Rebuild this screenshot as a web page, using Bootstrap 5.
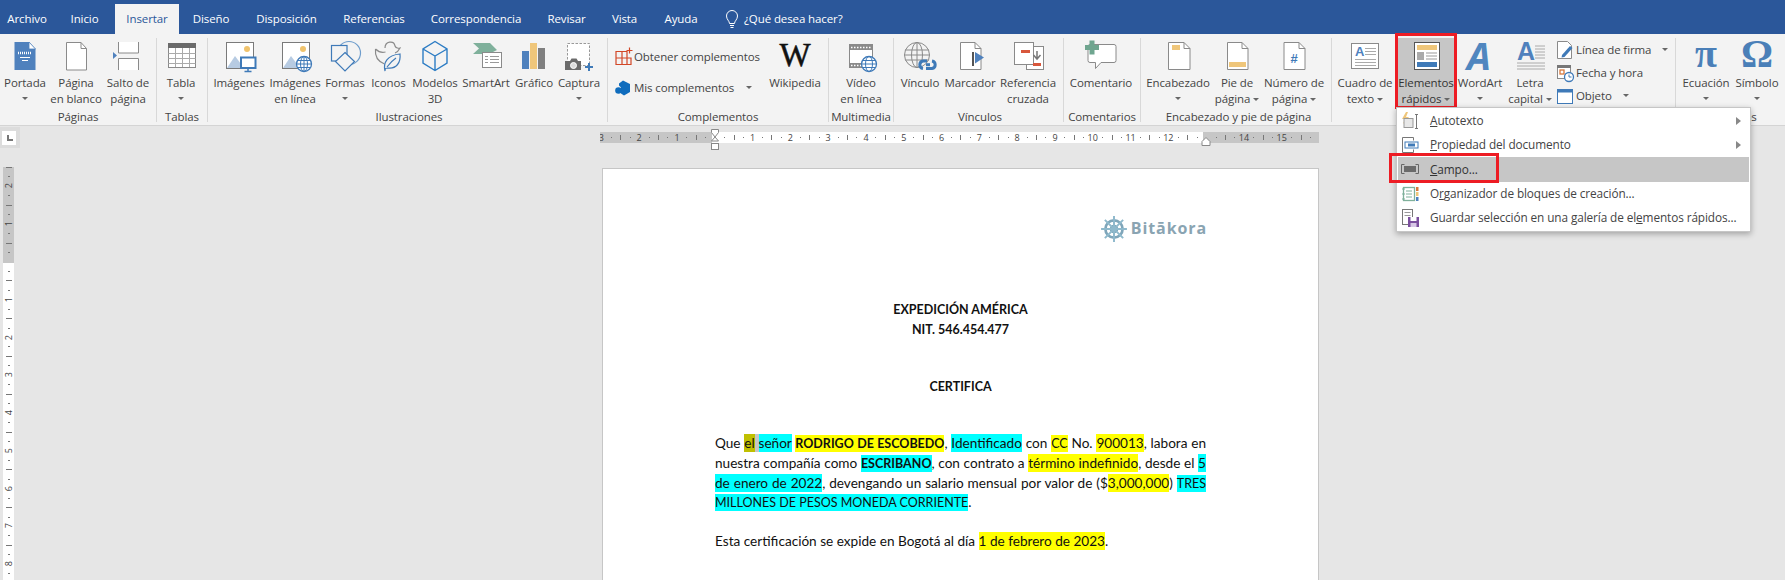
<!DOCTYPE html>
<html lang="es">
<head>
<meta charset="utf-8">
<title>Word</title>
<link href="https://cdn.jsdelivr.net/npm/bootstrap@5.3.0/dist/css/bootstrap.min.css" rel="stylesheet">
<style>
html,body{height:580px;overflow:hidden}
body{font-family:"Open Sans","Noto Sans",sans-serif;font-size:11.5px;color:#444;background:#e6e6e6;position:relative;letter-spacing:-.1px}
.tabbar{height:34px;background:#2b579a;color:#fff;display:grid;grid-template-columns:54px 61px 64px 64px 87px 88px 116px 65px 51px 62px 1fr;align-items:end}
.tabx{height:30px;line-height:30px;text-align:center;white-space:nowrap}
.tabx.on{background:#f3f3f3;color:#2b579a}
.tabq{height:30px;padding-left:13px;gap:5px}
.ribbon{height:92px;background:#f3f3f3;border-bottom:1px solid #d4d4d4;padding-top:4px}
.grp{height:84px;border-right:1px solid #d8d8d8;flex:none;display:flex;flex-direction:column}
.grp-btns{display:grid;height:72px}
.grp-lbl{height:12px;line-height:14px;text-align:center;white-space:nowrap}
.g1{width:157px}.g1 .grp-btns{grid-template-columns:50px 52px 52px}
.g2{width:51px}.g2 .grp-btns{grid-template-columns:48px}
.g3{width:400px;padding-left:3px}.g3 .grp-btns{grid-template-columns:56px 56px 44px 43px 50px 52px 44px 46px}
.g4{width:221px}.g4 .grp-btns{grid-template-columns:160px 54px}
.g5{width:65px}.g5 .grp-btns{grid-template-columns:64px}
.g6{width:170px;padding-left:3px}.g6 .grp-btns{grid-template-columns:46px 54px 62px}
.g7{width:77px}.g7 .grp-btns{grid-template-columns:74px}
.g8{width:191px;padding-left:5px}.g8 .grp-btns{grid-template-columns:64px 54px 60px}
.g9{width:344px;padding-left:1px}.g9 .grp-btns{grid-template-columns:64px 58px 50px 50px 115px}
.g10{width:109px;padding-left:4px;border-right:0}.g10 .grp-btns{grid-template-columns:52px 50px}
.rb{display:flex;flex-direction:column;align-items:center;padding-top:1px;line-height:15.5px;white-space:nowrap;min-width:0}
.rb>svg{width:36px;height:36px;flex:none;overflow:visible}
.rb>span{display:block}
.car{display:inline-block;width:0;height:0;border:3px solid transparent;border-top:3px solid #666;border-bottom:0;vertical-align:middle;margin-left:3px}
.car.solo{margin:6px 0 0}
.car.far{margin-left:11px}
.car.farther{margin-left:12px}
.rb-sel{background:#c6c6c6;height:68px;position:relative;color:#333}
.rb-sel::after{content:"";position:absolute;left:-2px;right:-2px;top:-5px;bottom:-3px;border:3px solid #ed1c24;z-index:3}
.smcol{display:flex;flex-direction:column;white-space:nowrap}
.smit{display:flex;align-items:center;height:23px}
.smit svg{width:20px;height:20px;flex:none;overflow:visible}
.cplx{padding-left:5px}
.cplx .smit{height:31px}
.cplx .smit:first-child{margin-top:3px}
.cplx .smit span.t{margin-left:1px}
.g9x .smit span.t{margin-left:1px}
.wiki{font-family:"Liberation Serif",serif;font-weight:400;font-size:33px;fill:#111;stroke:#111;stroke-width:.5px}
.pi{font-family:"Liberation Serif",serif;font-weight:700;font-size:40px;fill:#4a7fb8}
.wa{font-family:"Open Sans",sans-serif;font-weight:700;font-style:italic;font-size:38px;fill:#4f86bf}
.workrow{height:41px}
.corner{width:20px;height:21px;background:#dcdcdc;margin-top:1px;padding:4px 4px 3px 2px}
.cornerin{background:#fff;height:100%;position:relative}
.cornerin::after{content:"";position:absolute;left:5px;top:4px;width:6px;height:6px;border-left:2px solid #777;border-bottom:2px solid #777}
.hruler{width:719px;height:11px;margin:6px 0 0 580px;background:linear-gradient(to right,#c6c6c6 112px,#fff 112px,#fff 603px,#c6c6c6 603px);position:relative}
.hclip{overflow:hidden;height:11px;display:flex}
.hcell{flex:none;width:37.8px;height:11px;font-size:9px;line-height:11px;text-align:center;color:#444;letter-spacing:0;
background:linear-gradient(#777,#777) 9.4px 5px/1px 1px no-repeat,linear-gradient(#777,#777) 28.3px 5px/1px 1px no-repeat,linear-gradient(#777,#777) 0 3px/1px 5px no-repeat}
.hcell:first-child{margin-left:-17.5px}
.mk{position:absolute;overflow:visible}
.mk1{left:110px;top:-3px;width:10px;height:20px}
.mk2{left:601px;top:5px;width:10px;height:9px}
.vruler{width:11px;margin-left:3px;height:413px;overflow:hidden;flex:none;background:linear-gradient(to bottom,#c6c6c6 96px,#fff 96px)}
.vcell{height:37.8px;width:11px;display:flex;align-items:center;justify-content:center;font-size:9px;color:#444;letter-spacing:0;
background:linear-gradient(#777,#777) 5px 9.4px/2px 1px no-repeat,linear-gradient(#777,#777) 5px 28.3px/2px 1px no-repeat,linear-gradient(#777,#777) 3px 0/6px 1px no-repeat}
.vcell span{writing-mode:vertical-rl;transform:rotate(180deg);line-height:11px}
.sheet{width:717px;height:412px;margin:1px 0 0 588px;background:#fff;border:1px solid #c6c6c6;border-bottom:0;padding:47px 112px 0;flex:none;
font-family:Lato,"Liberation Sans",sans-serif;font-size:13.6px;line-height:19.7px;color:#111;letter-spacing:0}
.logoline{height:25px;margin-right:-1px}
.logoname{font-family:"Open Sans",sans-serif;font-weight:700;font-size:16px;letter-spacing:.9px;color:#8aa4b2;line-height:25px}
.logoline svg{width:28px;height:28px;margin-right:3px}
.ttl1{margin-top:59px}.ttl2{margin-top:38px}
.para{margin-top:37px}
.para2{margin-top:19px}
.bd{font-weight:700;font-size:12.5px}
.up{font-size:12.5px}
.jl{text-align:justify;text-align-last:justify;white-space:nowrap}
.hy{background:#ff0;padding:1px 0}
.hc{background:#0ff;padding:1px 0}
.ho{background:#c0c000;padding:1px 0}
.hg{background:#c6c6c6;padding:1px 0}
.qp-menu{position:absolute;left:1396px;top:107px;width:355px;height:125px;padding:1px;margin:0;border:1px solid #c6c6c6;border-radius:0;background:#fff;box-shadow:0 2px 6px rgba(0,0,0,.3);font-size:11.8px;z-index:5;min-width:0;color:#444;display:block}
.qp-it{height:24.2px;display:flex;align-items:center;padding:0;color:#444;position:relative;background:transparent;white-space:nowrap;font-size:inherit}
.qp-it:hover{color:#444}
.qp-it svg{width:20px;height:20px;margin:0 10px 0 2px;flex:none;overflow:visible}
.qp-it.cur{background:#c6c6c6;color:#333}
.qp-it.cur::after{content:"";position:absolute;left:-9px;top:-4px;width:110px;height:30px;border:3px solid #ed1c24}
.subarr{margin-left:auto;margin-right:8px;width:0;height:0;border:4px solid transparent;border-left:5px solid #888;border-right:0}
</style>
</head>
<body>
<div class="tabbar">
  <div class="tabx">Archivo</div><div class="tabx">Inicio</div><div class="tabx on">Insertar</div><div class="tabx">Diseño</div><div class="tabx">Disposición</div><div class="tabx">Referencias</div><div class="tabx">Correspondencia</div><div class="tabx">Revisar</div><div class="tabx">Vista</div><div class="tabx">Ayuda</div>
  <div class="tabq d-flex align-items-center">
    <svg width="14" height="20" viewBox="0 0 14 20" fill="none" stroke="#fff"><path d="M4.500 14.500c0-2.500-3-4-3-7.500a5.500 5.500 0 0 1 11 0c0 3.500-3 5-3 7.500z"/><path d="M5 16.500h4M5.500 18.500h3"/></svg>
    <span>¿Qué desea hacer?</span>
  </div>
</div>

<div class="ribbon d-flex">
  <div class="grp g1">
    <div class="grp-btns">
      <div class="rb"><svg viewBox="0 0 36 36"><path d="M7.500 3H22l6.500 7v21h-21z" fill="#4f81bd"/><path d="M22 3v7h6.500z" fill="#fff" stroke="#4f81bd" stroke-width=".8"/><path d="M11 14h14" stroke="#fff" stroke-width="2.500" stroke-dasharray="1 1"/><path d="M13 18.500h10M15 21.500h6" stroke="#fff"/></svg><span>Portada</span><i class="car solo"></i></div>
      <div class="rb"><svg viewBox="0 0 36 36"><path d="M8.500 3.500H23l5.500 6v21.500h-20z" fill="#fff" stroke="#8a8a8a"/><path d="M23 3.500v6h5.500" fill="none" stroke="#8a8a8a"/></svg><span>Página</span><span>en blanco</span></div>
      <div class="rb"><svg viewBox="0 0 36 36" fill="none"><path d="M8.500 3v11h20V3" stroke="#8a8a8a" fill="#fff"/><path d="M8.500 31V19.500h20V31" stroke="#8a8a8a" fill="#fff"/><path d="M3 13l4 3.500-4 3.500z" fill="#4f81bd"/></svg><span>Salto de</span><span>página</span></div>
    </div>
    <div class="grp-lbl">Páginas</div>
  </div>
  <div class="grp g2">
    <div class="grp-btns">
      <div class="rb"><svg viewBox="0 0 36 36"><rect x="5.500" y="4.500" width="27" height="24" fill="#fff" stroke="#8a8a8a"/><rect x="5" y="4" width="28" height="5" fill="#6a6a6a"/><path d="M5.500 14.500h27M5.500 19.500h27M5.500 24.500h27M12.500 9v19M19.500 9v19M26.500 9v19" stroke="#aaa" fill="none"/></svg><span>Tabla</span><i class="car solo"></i></div>
    </div>
    <div class="grp-lbl">Tablas</div>
  </div>
  <div class="grp g3">
    <div class="grp-btns">
      <div class="rb"><svg viewBox="0 0 36 36"><rect x="5.500" y="3.500" width="27" height="26" fill="#fff" stroke="#7a7a7a"/><circle cx="26" cy="10" r="3" fill="#f0c36d"/><path d="M6 29l8-12 9 12z" fill="#b7cbe2"/><rect x="20" y="18.500" width="14.500" height="10.500" fill="#fff" stroke="#3f7ab8" stroke-width="2"/><path d="M27 30v2M23.500 32.500h7" stroke="#3f7ab8" stroke-width="1.500"/></svg><span>Imágenes</span></div>
      <div class="rb"><svg viewBox="0 0 36 36"><rect x="5.500" y="3.500" width="27" height="26" fill="#fff" stroke="#7a7a7a"/><circle cx="26" cy="10" r="3" fill="#f0c36d"/><path d="M6 29l8-12 9 12z" fill="#b7cbe2"/><circle cx="27" cy="25" r="7.500" fill="#fff" stroke="#3f7ab8" stroke-width="1.300"/><path d="M19.500 25h15M20.500 21.500h13M20.500 28.500h13M27 17.500v15" stroke="#3f7ab8" fill="none"/><ellipse cx="27" cy="25" rx="3.500" ry="7.500" fill="none" stroke="#3f7ab8"/></svg><span>Imágenes</span><span>en línea</span></div>
      <div class="rb"><svg viewBox="0 0 36 36" fill="none" stroke="#3f7ab8" stroke-width="1.200"><circle cx="22" cy="14" r="11.500" stroke="#6d9ccb"/><rect x="4.500" y="6.500" width="15.500" height="15.500" fill="#f3f3f3"/><path d="M18 13.500l9.500 9-9.500 9.500-9.500-9.500z" fill="#f3f3f3"/></svg><span>Formas</span><i class="car solo"></i></div>
      <div class="rb"><svg viewBox="0 0 36 36" fill="none" stroke="#8a8a8a" stroke-width="1.200"><path d="M14 9c0-7 9-8 10-2 1 3 5 2 5 2-1 2-2 4-5 5M4.500 10c3 3 6 4 10 3M4.500 10c-1 9 4 13 9 15" /><path d="M14 32c-2-8 2-16 15-17 1 9-4 15-12 14-2 0-3 0-3 3zM16 28c3-4 6-7 9-9" stroke="#3f7ab8"/></svg><span>Iconos</span></div>
      <div class="rb"><svg viewBox="0 0 36 36" fill="none" stroke="#2c7cc4" stroke-width="1.400"><path d="M18 2.500l12 7.500v14l-12 7.500-12-7.500v-14zM6 10l12 7 12-7M18 17v14.500"/></svg><span>Modelos</span><span>3D</span></div>
      <div class="rb"><svg viewBox="0 0 36 36"><path d="M5 4h17l7 7-8 4H5l6-5.500z" fill="#7fb09b"/><rect x="14.500" y="13.500" width="19" height="15" fill="#fff" stroke="#8a8a8a"/><path d="M22 17.500h9M22 20.500h9M22 23.500h9M17 17.500h3M17 20.500h3M17 23.500h3" stroke="#999"/></svg><span>SmartArt</span></div>
      <div class="rb"><svg viewBox="0 0 36 36"><rect x="6" y="12" width="7" height="18" fill="#4f81bd"/><rect x="14" y="4" width="7" height="26" fill="#efc67a"/><rect x="22" y="9" width="7" height="21" fill="#7f7f7f"/></svg><span>Gráfico</span></div>
      <div class="rb"><svg viewBox="0 0 36 36"><rect x="6.500" y="4.500" width="22" height="22" fill="#fff" stroke="#999" stroke-dasharray="2.500 1.500"/><path d="M4 22h5l1.500-2.500h5l1.500 2.500h3v9H4z" fill="#6b6b6b"/><circle cx="12.500" cy="26.500" r="3" fill="#ddd" stroke="#fff"/><path d="M28 24v8M24 28h8" stroke="#3f7ab8" stroke-width="2"/></svg><span>Captura</span><i class="car solo"></i></div>
    </div>
    <div class="grp-lbl">Ilustraciones</div>
  </div>
  <div class="grp g4">
    <div class="grp-btns">
      <div class="smcol cplx">
        <div class="smit"><svg viewBox="0 0 20 20" fill="none" stroke="#d24726" stroke-width="1.200"><path d="M3 4.500h11v13H3zM3 11h15v6.500h-4M9 4.500v13M16.500 .5v6M13.500 3.500h6"/></svg><span class="t">Obtener complementos</span></div>
        <div class="smit"><svg viewBox="0 0 20 20"><path d="M10 2.500l7 3.500v8l-6 3.500-3-2v-6l-2-2v-2z" fill="#0f6cbd"/><circle cx="5.500" cy="12.500" r="3.300" fill="#0f6cbd"/></svg><span class="t">Mis complementos</span><i class="car farther"></i></div>
      </div>
      <div class="rb"><svg viewBox="0 0 36 36"><text class="wiki" x="18" y="27" text-anchor="middle">W</text></svg><span>Wikipedia</span></div>
    </div>
    <div class="grp-lbl">Complementos</div>
  </div>
  <div class="grp g5">
    <div class="grp-btns">
      <div class="rb"><svg viewBox="0 0 36 36"><rect x="6.500" y="5.500" width="23" height="23" fill="#fff" stroke="#8a8a8a"/><path d="M6 6h24v5H6zM6 24h24v5H6z" fill="#8a8a8a"/><path d="M8 8.500h21M8 26.500h21" stroke="#fff" stroke-width="1.500" stroke-dasharray="1.500 1.500"/><circle cx="26" cy="25" r="7.500" fill="#fff" stroke="#3f7ab8" stroke-width="1.300"/><path d="M18.500 25h15M19.500 21.500h13M19.500 28.500h13" stroke="#3f7ab8"/><ellipse cx="26" cy="25" rx="3.500" ry="7.500" fill="none" stroke="#3f7ab8"/></svg><span>Vídeo</span><span>en línea</span></div>
    </div>
    <div class="grp-lbl">Multimedia</div>
  </div>
  <div class="grp g6">
    <div class="grp-btns">
      <div class="rb"><svg viewBox="0 0 36 36" fill="none" stroke="#8a8a8a"><circle cx="15" cy="16" r="12.500"/><ellipse cx="15" cy="16" rx="5.500" ry="12.500"/><path d="M15 3.500v25M3 11h24M3 21h24M2.500 16h25"/><path d="M21 29.500a3.800 3.800 0 0 1 0-7.500h4M27 29.500h-3M30 22a3.800 3.800 0 0 1 0 7.500h-4" stroke="#3f7ab8" stroke-width="3"/><path d="M24 25.700h4" stroke="#3f7ab8" stroke-width="3"/></svg><span>Vínculo</span></div>
      <div class="rb"><svg viewBox="0 0 36 36"><path d="M8.500 3.500H23l6 6v21H8.500z" fill="#fff" stroke="#8a8a8a"/><path d="M23 3.500v6h6" fill="none" stroke="#8a8a8a"/><rect x="20" y="13" width="2" height="14" fill="#555"/><path d="M23 13l9 5.500-9 6z" fill="#4f81bd"/></svg><span>Marcador</span></div>
      <div class="rb"><svg viewBox="0 0 36 36"><rect x="16.500" y="7.500" width="17" height="23" fill="#fff" stroke="#8a8a8a"/><rect x="4.500" y="3.500" width="19" height="22" fill="#fff" stroke="#8a8a8a"/><rect x="11" y="11" width="9" height="3" fill="#d8573c"/><path d="M27 12v7M23.500 16l3.500 4 3.500-4" fill="none" stroke="#777" stroke-width="1.500"/><rect x="23" y="24" width="8" height="3" fill="#d8573c"/></svg><span>Referencia</span><span>cruzada</span></div>
    </div>
    <div class="grp-lbl">Vínculos</div>
  </div>
  <div class="grp g7">
    <div class="grp-btns">
      <div class="rb"><svg viewBox="0 0 36 36"><path d="M7 5.500h24a2 2 0 0 1 2 2v14a2 2 0 0 1-2 2H18l-5.500 6v-6H7a2 2 0 0 1-2-2v-14a2 2 0 0 1 2-2z" fill="#fff" stroke="#8a8a8a"/><path d="M6.500 1.500h5v4.500h4.500v5h-4.500v4.500h-5V11H2V6h4.500z" fill="#6fa58f"/></svg><span>Comentario</span></div>
    </div>
    <div class="grp-lbl">Comentarios</div>
  </div>
  <div class="grp g8">
    <div class="grp-btns">
      <div class="rb"><svg viewBox="0 0 36 36"><path d="M8.500 3.500H24l6 6v21H8.500z" fill="#fff" stroke="#8a8a8a"/><path d="M24 3.500v6h6" fill="none" stroke="#8a8a8a"/><rect x="12" y="6" width="8" height="5" fill="#efc67a"/></svg><span>Encabezado</span><i class="car solo"></i></div>
      <div class="rb"><svg viewBox="0 0 36 36"><path d="M8.500 3.500H23l6 6v21H8.500z" fill="#fff" stroke="#8a8a8a"/><path d="M23 3.500v6h6" fill="none" stroke="#8a8a8a"/><rect x="10" y="23" width="17" height="5" fill="#efc67a"/></svg><span>Pie de</span><span>página<i class="car"></i></span></div>
      <div class="rb"><svg viewBox="0 0 36 36"><path d="M8 3.500h15l6 6v21H8z" fill="#fff" stroke="#8a8a8a"/><path d="M23 3.500v6h6" fill="none" stroke="#8a8a8a"/><text x="18" y="24" text-anchor="middle" font-family="Liberation Sans,sans-serif" font-weight="700" font-size="13" fill="#3f7ab8">#</text></svg><span>Número de</span><span>página<i class="car"></i></span></div>
    </div>
    <div class="grp-lbl">Encabezado y pie de página</div>
  </div>
  <div class="grp g9">
    <div class="grp-btns">
      <div class="rb"><svg viewBox="0 0 36 36"><rect x="4.500" y="4.500" width="27" height="25" fill="#fff" stroke="#8a8a8a"/><text x="8" y="17" font-family="Liberation Sans,sans-serif" font-weight="700" font-size="13" fill="#4f81bd">A</text><path d="M18 9.500h11M18 12.500h11M18 15.500h11M8 20.500h21M8 23.500h21M8 26.500h21" stroke="#aaa"/></svg><span>Cuadro de</span><span>texto<i class="car"></i></span></div>
      <div class="rb rb-sel"><svg viewBox="0 0 36 36"><rect x="6.500" y="3.500" width="25" height="27" fill="#fff" stroke="#555"/><rect x="9" y="6" width="20" height="5" fill="#efc67a"/><rect x="9" y="13" width="7" height="8" fill="#aaa"/><path d="M18 14h11M18 17h11M18 20h11" stroke="#999"/><rect x="9" y="23" width="20" height="5" fill="#3f7ab8"/></svg><span>Elementos</span><span>rápidos<i class="car"></i></span></div>
      <div class="rb"><svg viewBox="0 0 36 36"><text class="wa" x="17" y="31" text-anchor="middle">A</text></svg><span>WordArt</span><i class="car solo"></i></div>
      <div class="rb"><svg viewBox="0 0 36 36"><text x="5" y="21" font-family="Liberation Sans,sans-serif" font-weight="700" font-size="25" fill="#4f81bd">A</text><path d="M23 7h10M23 10h10M23 13h10M23 16h10M23 19h10M5 24h28M5 27h28M5 30h28" stroke="#aaa"/></svg><span>Letra</span><span>capital<i class="car"></i></span></div>
      <div class="smcol g9x">
        <div class="smit"><svg viewBox="0 0 20 20"><path d="M2.500 1.500h10l4 4v13h-14z" fill="#fff" stroke="#8a8a8a"/><path d="M7 15l8-9 2.500 2-8 9-3 .5z" fill="#3f7ab8"/></svg><span class="t">Línea de firma</span><i class="car far"></i></div>
        <div class="smit"><svg viewBox="0 0 20 20"><rect x="2.500" y="3.500" width="13" height="12" fill="#fff" stroke="#8a8a8a"/><rect x="2" y="2" width="14" height="3" fill="#777"/><rect x="5" y="7" width="4" height="4" fill="none" stroke="#d8783c" stroke-width="1.300"/><circle cx="14" cy="14" r="4.500" fill="#fff" stroke="#3f7ab8" stroke-width="1.300"/><path d="M14 11.500V14h2.500" fill="none" stroke="#3f7ab8"/></svg><span class="t">Fecha y hora</span></div>
        <div class="smit"><svg viewBox="0 0 20 20"><rect x="2.500" y="3.500" width="15" height="14" fill="#fff" stroke="#3f7ab8"/><rect x="2" y="3" width="16" height="3.500" fill="#3f7ab8"/></svg><span class="t">Objeto</span><i class="car far"></i></div>
      </div>
    </div>
    <div class="grp-lbl">&nbsp;</div>
  </div>
  <div class="grp g10">
    <div class="grp-btns">
      <div class="rb"><svg viewBox="0 0 36 36"><text class="pi" x="18" y="28" text-anchor="middle">π</text></svg><span>Ecuación</span><i class="car solo"></i></div>
      <div class="rb"><svg viewBox="0 0 36 36"><text class="pi" x="18" y="28" text-anchor="middle">Ω</text></svg><span>Símbolo</span><i class="car solo"></i></div>
    </div>
    <div class="grp-lbl">Símbolos</div>
  </div>
</div>

<div class="workrow d-flex">
  <div class="corner"><div class="cornerin"></div></div>
  <div class="hruler">
    <div class="hclip">
      <div class="hcell">3</div><div class="hcell">2</div><div class="hcell">1</div><div class="hcell"></div><div class="hcell">1</div><div class="hcell">2</div><div class="hcell">3</div><div class="hcell">4</div><div class="hcell">5</div><div class="hcell">6</div><div class="hcell">7</div><div class="hcell">8</div><div class="hcell">9</div><div class="hcell">10</div><div class="hcell">11</div><div class="hcell">12</div><div class="hcell"></div><div class="hcell">14</div><div class="hcell">15</div><div class="hcell"></div>
    </div>
    <svg class="mk mk1" viewBox="0 0 10 20"><path d="M1.500 .5h7v3L5 8 1.500 3.500zM5 8l3.500 4H1.500z" fill="#fff" stroke="#888"/><rect x="1.500" y="14.500" width="7" height="6" fill="#fff" stroke="#888"/></svg>
    <svg class="mk mk2" viewBox="0 0 10 9"><path d="M5 .5l4 4v4H1v-4z" fill="#fff" stroke="#888"/></svg>
  </div>
</div>
<div class="d-flex">
  <div class="vruler">
    <div class="vcell"><span>2</span></div><div class="vcell"><span>1</span></div><div class="vcell"></div><div class="vcell"><span>1</span></div><div class="vcell"><span>2</span></div><div class="vcell"><span>3</span></div><div class="vcell"><span>4</span></div><div class="vcell"><span>5</span></div><div class="vcell"><span>6</span></div><div class="vcell"><span>7</span></div><div class="vcell"><span>8</span></div>
  </div>
  <div class="sheet">
    <div class="logoline d-flex justify-content-end align-items-center">
      <svg viewBox="0 0 26 26" fill="none" stroke="#7fa6ba"><circle cx="13" cy="13" r="8" stroke-width="2.500"/><circle cx="13" cy="13" r="3" stroke-width="2"/><path d="M13 1v24M1 13h24M4.500 4.500l17 17M21.500 4.500l-17 17" stroke-width="1.800" stroke="#8eb9cc"/></svg>
      <span class="logoname">Bitākora</span>
    </div>
    <div class="ttl1 text-center bd">EXPEDICIÓN AMÉRICA</div>
    <div class="text-center bd">NIT. 546.454.477</div>
    <div class="ttl2 text-center bd">CERTIFICA</div>
    <div class="para">
      <div class="jl">Que <span class="ho">el</span><span class="hg"> </span><span class="hc">señor</span> <span class="hy bd">RODRIGO DE ESCOBEDO</span>, <span class="hc">Identificado</span> con <span class="hy up">CC</span> No. <span class="hy">900013</span>, labora en</div>
      <div class="jl">nuestra compañía como <span class="hc bd">ESCRIBANO</span>, con contrato a <span class="hy">término indefinido</span>, desde el <span class="hc">5</span></div>
      <div class="jl"><span class="hc">de enero de 2022</span>, devengando un salario mensual por valor de ($<span class="hy">3,000,000</span>) <span class="hc up">TRES</span></div>
      <div><span class="hc up">MILLONES DE PESOS MONEDA CORRIENTE</span>.</div>
    </div>
    <div class="para2">Esta certificación se expide en Bogotá al día <span class="hy">1 de febrero de 2023</span>.</div>
  </div>
</div>

<div class="qp-menu dropdown-menu show">
  <div class="qp-it dropdown-item"><svg viewBox="0 0 20 20"><path d="M6 1L2 8h3l-2 5 6-7H6l2-5z" fill="#efc67a"/><rect x="4" y="7.500" width="9" height="9" fill="#e8e8e8" stroke="#999"/><path d="M15 3.500h3M15 17.500h3M16.500 3.500v14" stroke="#777" fill="none"/></svg><span><u>A</u>utotexto</span><i class="subarr"></i></div>
  <div class="qp-it dropdown-item"><svg viewBox="0 0 20 20"><path d="M2.500 2.500h11v3M2.500 2.500v15h11v-3" fill="none" stroke="#777"/><rect x="5" y="7" width="13" height="6" fill="#fff" stroke="#3f7ab8"/><rect x="8" y="8.500" width="7" height="3" fill="#3f7ab8"/></svg><span><u>P</u>ropiedad del documento</span><i class="subarr"></i></div>
  <div class="qp-it dropdown-item cur"><svg viewBox="0 0 20 20"><path d="M4.500 5.500h-3v9h3M15.500 5.500h3v9h-3" fill="none" stroke="#666"/><rect x="4" y="7" width="12" height="6" fill="#6a6a6a"/></svg><span><u>C</u>ampo...</span></div>
  <div class="qp-it dropdown-item"><svg viewBox="0 0 20 20"><rect x="3.500" y="3.500" width="11" height="13" fill="#fff" stroke="#7fb09b" stroke-width="1.300"/><path d="M6 7h6M6 10h6M6 13h6" stroke="#7fb09b"/><path d="M2 5h3M2 10h3M2 15h3" stroke="#7fb09b"/><rect x="16" y="3" width="2.500" height="4" fill="#d8783c"/><rect x="16" y="8" width="2.500" height="4" fill="#efc67a"/><rect x="16" y="13" width="2.500" height="4" fill="#4f81bd"/></svg><span>O<u>r</u>ganizador de bloques de creación...</span></div>
  <div class="qp-it dropdown-item"><svg viewBox="0 0 20 20"><rect x="2.500" y="1.500" width="10" height="15" fill="#fff" stroke="#777"/><path d="M4.500 4.500h6M4.500 7.500h6" stroke="#999"/><rect x="8" y="9" width="11" height="10" fill="#7b4f9e"/><rect x="10.500" y="9" width="6" height="4" fill="#fff"/><rect x="10.500" y="15" width="6" height="4" fill="#d8c8e6"/></svg><span>Guardar selección en una galería de el<u>e</u>mentos rápidos...</span></div>
</div>
<script src="https://cdn.jsdelivr.net/npm/bootstrap@5.3.0/dist/js/bootstrap.bundle.min.js"></script>
</body>
</html>
